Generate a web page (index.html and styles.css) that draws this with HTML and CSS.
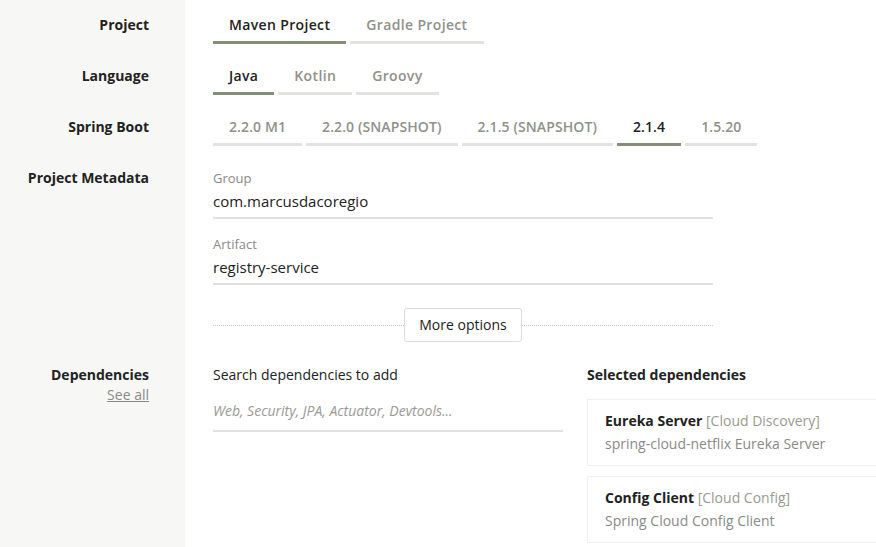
FILE: index.html
```html
<!DOCTYPE html>
<html>
<head>
<meta charset="utf-8">
<link rel="stylesheet" href="styles.css">
</head>
<body>
<div class="page">
  <div class="row">
    <div class="label">Project</div>
    <div class="content">
      <div class="tabs">
        <div class="tab active">Maven Project</div>
        <div class="tab">Gradle Project</div>
      </div>
    </div>
  </div>
  <div class="row">
    <div class="label">Language</div>
    <div class="content">
      <div class="tabs">
        <div class="tab active">Java</div>
        <div class="tab">Kotlin</div>
        <div class="tab">Groovy</div>
      </div>
    </div>
  </div>
  <div class="row">
    <div class="label">Spring Boot</div>
    <div class="content">
      <div class="tabs versions">
        <div class="tab">2.2.0 M1</div>
        <div class="tab">2.2.0 (SNAPSHOT)</div>
        <div class="tab">2.1.5 (SNAPSHOT)</div>
        <div class="tab active">2.1.4</div>
        <div class="tab">1.5.20</div>
      </div>
    </div>
  </div>
  <div class="row">
    <div class="label">Project Metadata</div>
    <div class="content meta">
      <div class="field">
        <div class="field-label">Group</div>
        <div class="field-input">com.marcusdacoregio</div>
      </div>
      <div class="field">
        <div class="field-label">Artifact</div>
        <div class="field-input">registry-service</div>
      </div>
      <div class="more">
        <span class="more-line"></span>
        <button class="more-btn">More options</button>
        <span class="more-line"></span>
      </div>
    </div>
  </div>
  <div class="row grow">
    <div class="label">
      <div>Dependencies</div>
      <a class="see-all">See all</a>
    </div>
    <div class="content deps">
      <div class="search">
        <div class="search-title">Search dependencies to add</div>
        <div class="search-input">Web, Security, JPA, Actuator, Devtools...</div>
      </div>
      <div class="selected">
        <div class="selected-title">Selected dependencies</div>
        <div class="card">
          <div class="card-title"><strong>Eureka Server</strong> <span class="group">[Cloud Discovery]</span></div>
          <div class="card-desc">spring-cloud-netflix Eureka Server</div>
        </div>
        <div class="card">
          <div class="card-title"><strong>Config Client</strong> <span class="group">[Cloud Config]</span></div>
          <div class="card-desc">Spring Cloud Config Client</div>
        </div>
      </div>
    </div>
  </div>
</div>
</body>
</html>
```

FILE: styles.css
```css
html, body {
  margin: 0;
  padding: 0;
  height: 100%;
  background: #ffffff;
  overflow: hidden;
}
body {
  font-family: "Open Sans", "Noto Sans", sans-serif;
  font-size: 14px;
  line-height: 20px;
  color: #222;
}
.page {
  display: flex;
  flex-direction: column;
  height: 100%;
}
.row {
  display: flex;
}
.row.grow {
  flex: 1;
}
.label {
  width: 185px;
  flex: none;
  box-sizing: border-box;
  background: #f7f8f5;
  text-align: right;
  padding: 15px 36px 0 0;
  font-weight: 700;
}
.content {
  padding: 0 0 0 28px;
  flex: 1;
  min-width: 0;
}
.tabs {
  display: flex;
  gap: 4px;
  padding-top: 15px;
  padding-bottom: 7px;
}
.tab {
  padding: 0 16px 6px;
  border-bottom: 3px solid #e3e3e1;
  color: #8f918a;
  font-weight: 600;
  letter-spacing: 0.35px;
  white-space: nowrap;
}
.versions .tab {
  letter-spacing: 0.1px;
}
.tab.active {
  color: #222;
  border-bottom-color: #848e78;
}
.meta {
  width: 500px;
  flex: none;
  padding-top: 15px;
}
.field {
  margin-bottom: 15px;
}
.field-label {
  font-size: 13px;
  color: #8a8a86;
  margin-bottom: 3px;
}
.field-input {
  font-size: 15px;
  padding-bottom: 6px;
  border-bottom: 2px solid #e1e1e1;
  color: #222;
}
.more {
  display: flex;
  align-items: center;
  margin-top: 23px;
  margin-bottom: 8px;
}
.more-line {
  flex: 1;
  border-top: 1px dotted #c9c9c9;
}
.more-btn {
  font: inherit;
  color: #222;
  background: #fff;
  border: 1px solid #dcdcdc;
  border-radius: 3px;
  height: 34px;
  width: 118px;
  padding: 0;
}
.see-all {
  display: inline-block;
  color: #8a8a86;
  font-weight: 400;
  text-decoration: underline;
}
.deps {
  display: flex;
  gap: 24px;
  padding-top: 15px;
}
.search {
  width: 350px;
  flex: none;
}
.search-input {
  margin-top: 16px;
  padding-bottom: 9px;
  border-bottom: 2px solid #e1e1e1;
  font-style: italic;
  color: #9a9a96;
}
.selected {
  width: 330px;
  flex: none;
}
.selected-title {
  font-weight: 700;
  margin-bottom: 14px;
}
.card {
  border: 1px solid #f0f0ee;
  padding: 11px 17px;
  margin-bottom: 10px;
  line-height: 20px;
}
.card-title {
  margin-bottom: 3px;
}
.card-title strong {
  font-weight: 700;
}
.group {
  color: #9a9a8e;
}
.card-desc {
  color: #8a8a86;
}
```
